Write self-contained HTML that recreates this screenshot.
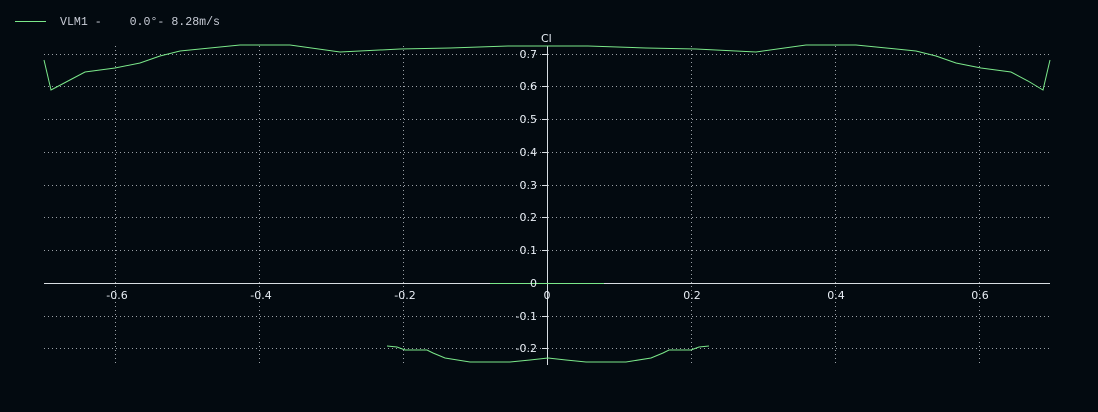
<!DOCTYPE html>
<html><head><style>
html,body{margin:0;padding:0;background:#030a10;width:1098px;height:412px;overflow:hidden}
svg text{font-family:"DejaVu Sans","Liberation Sans",sans-serif;font-size:11px;fill:#e8eef5}
</style></head><body>
<svg width="1098" height="412" xmlns="http://www.w3.org/2000/svg">
<g stroke="#9aa0a6" stroke-width="1" stroke-dasharray="1,3" fill="none">
<line x1="44" y1="54.5" x2="1050" y2="54.5"/>
<line x1="44" y1="86.5" x2="1050" y2="86.5"/>
<line x1="44" y1="119.5" x2="1050" y2="119.5"/>
<line x1="44" y1="152.5" x2="1050" y2="152.5"/>
<line x1="44" y1="185.5" x2="1050" y2="185.5"/>
<line x1="44" y1="217.5" x2="1050" y2="217.5"/>
<line x1="44" y1="250.5" x2="1050" y2="250.5"/>
<line x1="44" y1="316.5" x2="1050" y2="316.5"/>
<line x1="44" y1="348.5" x2="1050" y2="348.5"/>
<line x1="115.5" y1="46" x2="115.5" y2="365"/>
<line x1="259.5" y1="46" x2="259.5" y2="365"/>
<line x1="403.5" y1="46" x2="403.5" y2="365"/>
<line x1="691.5" y1="46" x2="691.5" y2="365"/>
<line x1="835.5" y1="46" x2="835.5" y2="365"/>
<line x1="979.5" y1="46" x2="979.5" y2="365"/>
</g>
<g stroke="#d8dde2" stroke-width="1">
<line x1="44" y1="283.5" x2="1050" y2="283.5"/>
<line x1="547.5" y1="46" x2="547.5" y2="365"/>
<line x1="542" y1="54.5" x2="547" y2="54.5"/><line x1="542" y1="86.5" x2="547" y2="86.5"/>
<line x1="542" y1="119.5" x2="547" y2="119.5"/><line x1="542" y1="152.5" x2="547" y2="152.5"/>
<line x1="542" y1="185.5" x2="547" y2="185.5"/><line x1="542" y1="217.5" x2="547" y2="217.5"/>
<line x1="542" y1="250.5" x2="547" y2="250.5"/><line x1="542" y1="316.5" x2="547" y2="316.5"/>
<line x1="542" y1="348.5" x2="547" y2="348.5"/>
</g>
<g stroke="#7be88a" stroke-width="1" fill="none">
<line x1="15" y1="21.5" x2="46" y2="21.5"/>
<polyline points="44,60 51,90 68,81 85,72 115,68 140,63 160,56 180,51 240,45 290,45 340,52 400,49 450,48 508,46 548,46 588,46 646,48 696,49 756,52 806,45 856,45 916,51 936,56 956,63 981,68 1011,72 1028,81 1043,90 1050,60"/>
<polyline points="387,346 397,347 405,350 427,350 433,353 445,358 470,362 510,362 530,360 548,358 566,360 586,362 626,362 651,358 663,353 669,350 691,350 699,347 709,346"/>
<line x1="490" y1="283.5" x2="604" y2="283.5"/>
</g>
<text x="60" y="25" xml:space="preserve" style="font-family:'Liberation Mono',monospace;font-size:11.6px;fill:#c8ccd6;white-space:pre">VLM1 -    0.0°- 8.28m/s</text>
<text x="541" y="42">Cl</text>
<g text-anchor="end">
<text x="537" y="58">0.7</text><text x="537" y="90">0.6</text><text x="537" y="123">0.5</text>
<text x="537" y="156">0.4</text><text x="537" y="189">0.3</text><text x="537" y="221">0.2</text>
<text x="537" y="254">0.1</text><text x="537" y="287">0</text><text x="537" y="320">-0.1</text>
<text x="537" y="352">-0.2</text>
</g>
<g text-anchor="middle">
<text x="117" y="299">-0.6</text><text x="261" y="299">-0.4</text><text x="405" y="299">-0.2</text>
<text x="547" y="299">0</text><text x="692" y="299">0.2</text><text x="836" y="299">0.4</text>
<text x="980" y="299">0.6</text>
</g>
</svg>
</body></html>
